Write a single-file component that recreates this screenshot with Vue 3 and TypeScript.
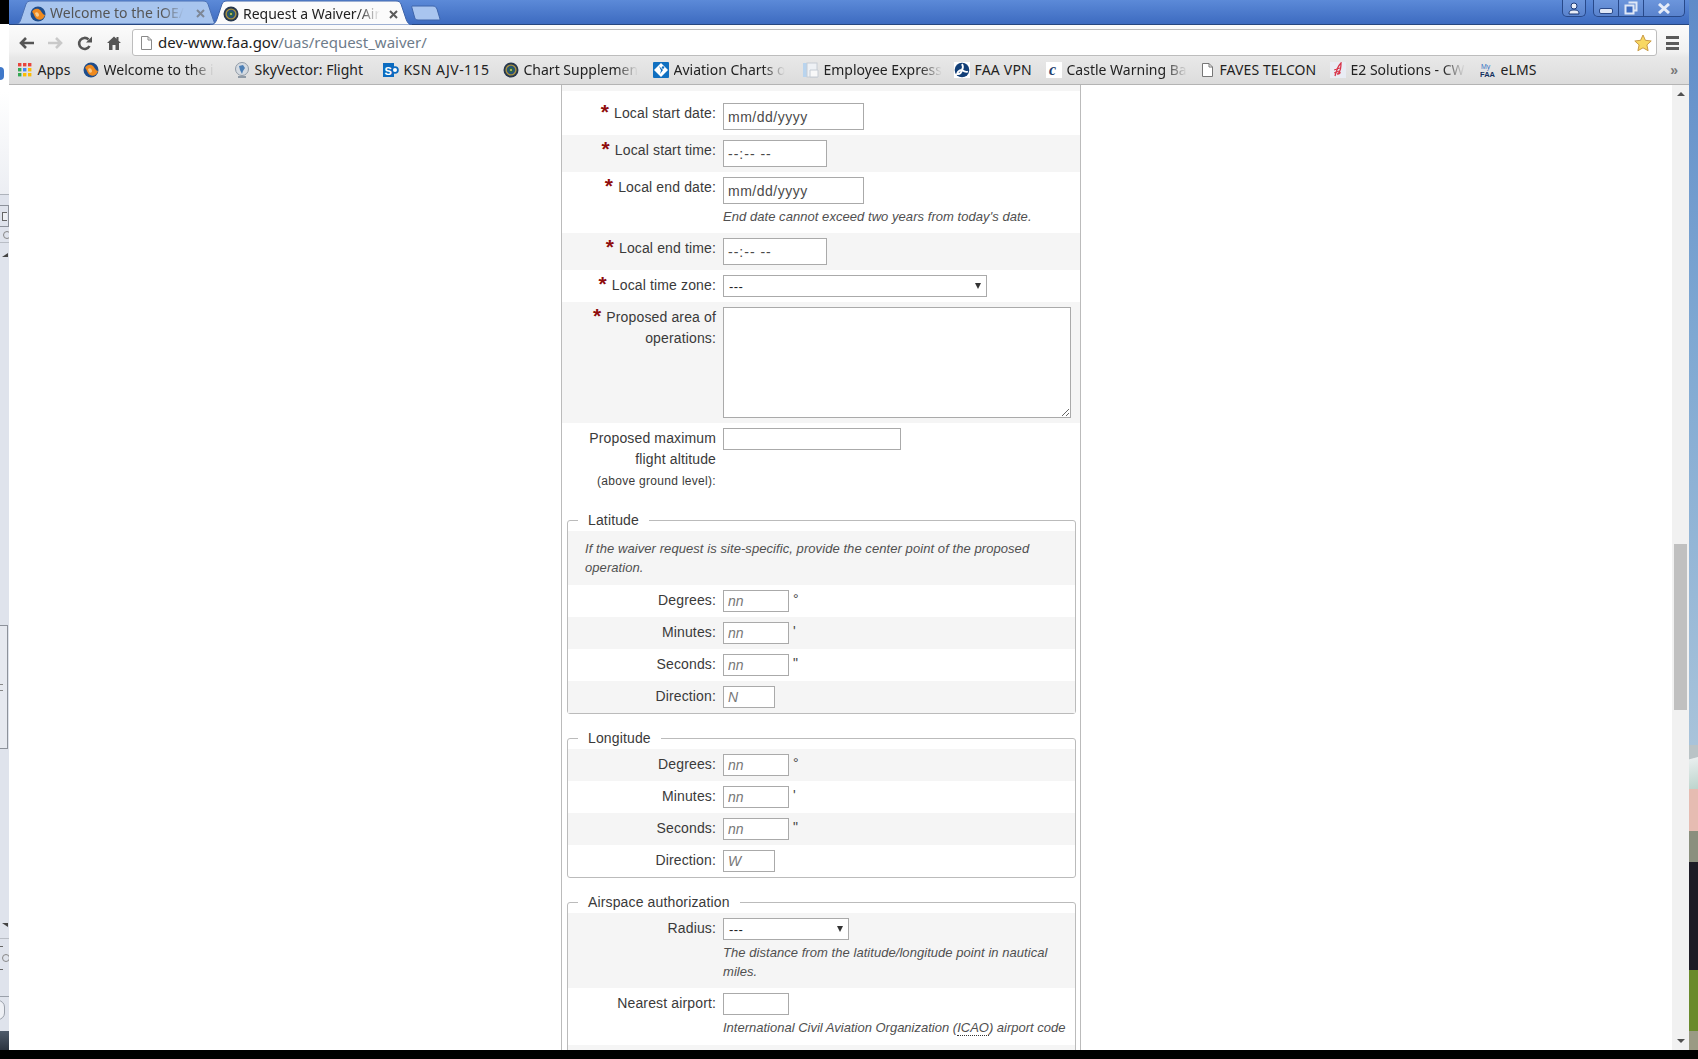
<script setup lang="ts">
interface Bookmark { text: string; icon: string; width: number; fade: boolean; spacing: number }
const bookmarks: Bookmark[] = [
  { text: 'Apps', icon: 'apps', width: 66, fade: false, spacing: 0 },
  { text: 'Welcome to the i', icon: 'swirl', width: 151, fade: true, spacing: 0 },
  { text: 'SkyVector: Flight', icon: 'sky', width: 149, fade: false, spacing: 0 },
  { text: 'KSN AJV-115', icon: 'sp', width: 120, fade: false, spacing: 0.45 },
  { text: 'Chart Supplemen', icon: 'seal', width: 150, fade: true, spacing: 0 },
  { text: 'Aviation Charts o', icon: 'diamond', width: 150, fade: true, spacing: 0 },
  { text: 'Employee Express', icon: 'docs', width: 151, fade: true, spacing: 0 },
  { text: 'FAA VPN', icon: 'dot', width: 92, fade: false, spacing: 0.2 },
  { text: 'Castle Warning Ba', icon: 'castle', width: 153, fade: true, spacing: 0 },
  { text: 'FAVES TELCON', icon: 'page', width: 131, fade: false, spacing: 0.1 },
  { text: 'E2 Solutions - CW', icon: 'feather', width: 150, fade: true, spacing: 0 },
  { text: 'eLMS', icon: 'myfaa', width: 60, fade: false, spacing: 0.1 },
]
const latRows = [
  { label: 'Degrees:', mark: '°', alt: false },
  { label: 'Minutes:', mark: "'", alt: true },
  { label: 'Seconds:', mark: '"', alt: false },
]
const lonRows = [
  { label: 'Degrees:', mark: '°', alt: true },
  { label: 'Minutes:', mark: "'", alt: false },
  { label: 'Seconds:', mark: '"', alt: true },
]
</script>

<template>
  <div class="desktop">
    <div class="screen">
      <aside class="sliver">
        <div class="sliver-black"></div>
        <div class="sliver-top"><span class="sliver-dot"></span></div>
        <div class="sliver-panel">
          <span class="sl-ic"><span class="sl-glyph"></span></span>
          <span class="sl-ic sl-ic2"><span class="sl-round"></span></span>
          <span class="sl-tri"></span>
          <div class="sl-thumb"><span class="sl-grip"></span></div>
          <span class="sl-tri sl-tri2"></span>
          <span class="sl-rule"></span>
          <span class="sl-dash"></span>
          <span class="sl-round sl-round2"></span>
          <span class="sl-dash"></span>
          <span class="sl-rule sl-rule2"></span>
          <span class="sl-pill"></span>
        </div>
        <div class="sliver-dark"></div>
      </aside>

      <div class="window">
        <header class="titlebar">
          <div class="tabs">
            <div class="tab">
              <svg class="tab-bg" width="200" height="24" viewBox="0 0 200 24"><path d="M0 24C4 24 5 22 6 19L11 4C12 2 13 1 16 1H188C191 1 192 2 193 4L198 19C199 22 200 24 200 24Z" fill="#a8c5ee" stroke="#4a70b4" stroke-width="1"/></svg>
              <svg class="fav" width="16" height="16" viewBox="0 0 16 16"><circle cx="8" cy="8" r="7.5" fill="#1e4d8c"/><path d="M2 6C4 2 8 2 10 4C12 6 13 9 15 9C14 13 10 15 7 13C4 11 4 7 2 6Z" fill="#ef8a1f"/><path d="M5 7C7 5 9 7 9 9C9 11 7 11 6 10Z" fill="#f7c98a"/></svg>
              <span class="tab-title"><span class="faded dim">Welcome to the iOE/</span></span>
              <svg class="close" width="9" height="9" viewBox="0 0 9 9"><path d="M1 1L8 8M8 1L1 8" stroke="#7d8796" stroke-width="2"/></svg>
            </div>
            <div class="tab tab-active">
              <svg class="tab-bg" width="202" height="25" viewBox="0 0 202 25"><path d="M0 25C4 25 6 22 7 19L12 4C13 2 14 1 17 1H186C189 1 190 2 191 4L196 19C197 22 199 25 202 25Z" fill="#fbfbfb" stroke="#3e64aa" stroke-width="1"/></svg>
              <svg class="fav" width="16" height="16" viewBox="0 0 16 16"><circle cx="8" cy="8" r="7.5" fill="#26374d"/><circle cx="8" cy="8" r="5.6" fill="#a8923f"/><circle cx="8" cy="8" r="4.2" fill="#27507a"/><circle cx="8" cy="8" r="2.4" fill="#2c6a3f"/><circle cx="8" cy="8" r="1" fill="#d8c468"/></svg>
              <span class="tab-title"><span class="faded">Request a Waiver/Air</span></span>
              <svg class="close" width="9" height="9" viewBox="0 0 9 9"><path d="M1 1L8 8M8 1L1 8" stroke="#5b5b5b" stroke-width="2"/></svg>
            </div>
            <svg class="newtab" width="30" height="16" viewBox="0 0 30 16"><path d="M1 1H22C24 1 25 2 26 4L29 14C29 15 28 15 27 15H7C5 15 4 14 3.500 12L1 3C0.700 2 0.700 1 1 1Z" fill="#a9c5ef" stroke="#3e64aa"/></svg>
          </div>
          <div class="controls">
            <div class="ctl ctl-user">
              <svg width="14" height="13" viewBox="0 0 14 13"><circle cx="7" cy="4" r="3" fill="#e9eef8" stroke="#1d3b78"/><path d="M2 12C2 8.500 4 8 7 8C10 8 12 8.500 12 12Z" fill="#e9eef8" stroke="#1d3b78"/></svg>
            </div>
            <div class="ctl ctl-group">
              <div class="cell cell-min"><span class="minbar"></span></div>
              <div class="cell cell-res">
                <svg width="14" height="14" viewBox="0 0 14 14"><path d="M4.500 1.500H12.500V9.500H10" fill="none" stroke="#dfe7f6" stroke-width="2"/><rect x="1.500" y="4.500" width="8" height="8" fill="#3e6cc0" stroke="#dfe7f6" stroke-width="2"/></svg>
              </div>
              <div class="cell cell-close">
                <svg width="14" height="11" viewBox="0 0 14 11"><path d="M2 1L12 10M12 1L2 10" stroke="#e6ecf8" stroke-width="3"/></svg>
              </div>
            </div>
          </div>
        </header>

        <div class="chrome">
          <div class="toolbar">
            <div class="nav">
              <svg class="n-back" width="15" height="12" viewBox="0 0 15 12"><path d="M7 1L2 6L7 11M2 6H15" fill="none" stroke="#555" stroke-width="2.600"/></svg>
              <svg class="n-fwd" width="15" height="12" viewBox="0 0 15 12"><path d="M8 1L13 6L8 11M13 6H0" fill="none" stroke="#c9c9c9" stroke-width="2.600"/></svg>
              <svg class="n-rel" width="15" height="15" viewBox="0 0 15 15"><path d="M12.500 10A5.500 5.500 0 1 1 11.500 3.500" fill="none" stroke="#555" stroke-width="2.600"/><path d="M9 6.500H15V0.500Z" fill="#555"/></svg>
              <svg class="n-home" width="14" height="14" viewBox="0 0 14 14"><path d="M7 0.500L0 7H2V14H5.500V9H8.500V14H12V7H14L11.500 4.700V1H9.500V2.800Z" fill="#555"/></svg>
            </div>
            <div class="omnibox">
              <svg class="pg" width="11" height="14" viewBox="0 0 11 14"><path d="M1 .5H7L10.500 4V13.500H.5V.5Z" fill="#fff" stroke="#8a8a8a"/><path d="M7 .5V4H10.500" fill="none" stroke="#8a8a8a"/></svg>
              <span class="url"><span class="host">dev-www.faa.gov</span>/uas/request_waiver/</span>
              <svg class="star" width="18" height="18" viewBox="0 0 18 18"><path d="M9 1L11.400 6.300L17.200 7L12.900 10.900L14.100 16.700L9 13.800L3.900 16.700L5.100 10.900L.8 7L6.600 6.300Z" fill="#f8d862" stroke="#c99a45"/></svg>
            </div>
            <div class="menu"><span></span><span></span><span></span></div>
          </div>
          <div class="bookmarks">
            <div v-for="b in bookmarks" :key="b.text" class="bm" :style="{ width: b.width + 'px' }">
              <span class="bm-ic">
                <svg v-if="b.icon === 'apps'" width="14" height="14" viewBox="0 0 14 14">
                  <rect x="0" y="0" width="3.400" height="3.400" fill="#e8453c"/><rect x="5" y="0" width="3.400" height="3.400" fill="#e8453c"/><rect x="10" y="0" width="3.400" height="3.400" fill="#e8453c"/>
                  <rect x="0" y="5" width="3.400" height="3.400" fill="#34a853"/><rect x="5" y="5" width="3.400" height="3.400" fill="#4285f4"/><rect x="10" y="5" width="3.400" height="3.400" fill="#fbbc05"/>
                  <rect x="0" y="10" width="3.400" height="3.400" fill="#34a853"/><rect x="5" y="10" width="3.400" height="3.400" fill="#fbbc05"/><rect x="10" y="10" width="3.400" height="3.400" fill="#fbbc05"/>
                </svg>
                <svg v-else-if="b.icon === 'swirl'" width="16" height="16" viewBox="0 0 16 16"><circle cx="8" cy="8" r="7.500" fill="#1e4d8c"/><path d="M2 6C4 2 8 2 10 4C12 6 13 9 15 9C14 13 10 15 7 13C4 11 4 7 2 6Z" fill="#ef8a1f"/><path d="M5 7C7 5 9 7 9 9C9 11 7 11 6 10Z" fill="#f7c98a"/></svg>
                <svg v-else-if="b.icon === 'sky'" width="16" height="16" viewBox="0 0 16 16"><circle cx="8" cy="7" r="6.500" fill="#d5dbe2" stroke="#8f9aa6"/><path d="M5 4L9 3L11 6L9 9L8 12L6 8Z" fill="#4d7fb5"/><path d="M4 15H12" stroke="#8f9aa6" stroke-width="2"/></svg>
                <svg v-else-if="b.icon === 'sp'" width="16" height="16" viewBox="0 0 16 16"><rect x="0" y="1" width="11" height="14" fill="#0b6bc0"/><circle cx="12" cy="8" r="3.800" fill="#0b6bc0"/><circle cx="12" cy="8" r="2" fill="#fff"/><text x="1.500" y="12.500" font-size="11" font-weight="700" font-family="Liberation Sans" fill="#fff">S</text></svg>
                <svg v-else-if="b.icon === 'seal'" width="16" height="16" viewBox="0 0 16 16"><circle cx="8" cy="8" r="7.500" fill="#26374d"/><circle cx="8" cy="8" r="5.600" fill="#a8923f"/><circle cx="8" cy="8" r="4.200" fill="#27507a"/><circle cx="8" cy="8" r="2.400" fill="#2c6a3f"/><circle cx="8" cy="8" r="1" fill="#d8c468"/></svg>
                <svg v-else-if="b.icon === 'diamond'" width="16" height="16" viewBox="0 0 16 16"><rect x="0" y="0" width="16" height="16" rx="1" fill="#0f6fc0"/><path d="M8 1L15 8L8 15L1 8Z" fill="#fff"/><path d="M6 4L10 8L7 12L8 8.500Z" fill="#0f6fc0"/><circle cx="10" cy="5.500" r="1.200" fill="#0f6fc0"/></svg>
                <svg v-else-if="b.icon === 'docs'" width="16" height="16" viewBox="0 0 16 16"><rect x="0" y="1" width="6" height="14" fill="#b9d4ee"/><rect x="4" y="1" width="10" height="14" fill="#eef1f5" stroke="#c6ccd4"/><path d="M7 8H15V15H7Z" fill="#f8f8f8" stroke="#c6ccd4"/></svg>
                <svg v-else-if="b.icon === 'dot'" width="16" height="16" viewBox="0 0 16 16"><rect width="16" height="16" fill="#fff"/><circle cx="8" cy="8" r="7.300" fill="#123f78"/><path d="M8 2C9.500 4.500 9 6.500 8 8C6 8 4 9 3 12C6 12.500 7.500 10.500 8 8C10 9.500 12 10.500 14 9.500" fill="none" stroke="#fff" stroke-width="1.800"/></svg>
                <svg v-else-if="b.icon === 'castle'" width="16" height="16" viewBox="0 0 16 16"><rect width="16" height="16" fill="#fff"/><text x="3" y="13" font-size="16" font-style="italic" font-weight="700" font-family="Liberation Serif" fill="#23406e">c</text></svg>
                <svg v-else-if="b.icon === 'page'" width="11" height="14" viewBox="0 0 11 14"><path d="M1 .5H7L10.500 4V13.500H.5V.5Z" fill="#fff" stroke="#777"/><path d="M7 .5V4H10.500" fill="none" stroke="#777"/></svg>
                <svg v-else-if="b.icon === 'feather'" width="16" height="16" viewBox="0 0 16 16"><rect width="16" height="16" fill="#e9ecf4"/><path d="M5 14C6 10 8 4 11 1C11 5 11 8 9 10C11 10 10 12 7 12" fill="none" stroke="#d8344a" stroke-width="1.300"/><path d="M4 8L10 6M4 11L9 9" stroke="#d8344a"/></svg>
                <svg v-else width="16" height="16" viewBox="0 0 16 16"><text x="1" y="6.500" font-size="7" font-family="Liberation Sans" fill="#3b74c4">My</text><text x="0" y="14.500" font-size="7.500" font-weight="700" font-family="Liberation Sans" fill="#13315f">FAA</text></svg>
              </span>
              <span class="bm-text" :class="{ faded: b.fade }" :style="{ letterSpacing: b.spacing + 'px' }">{{ b.text }}</span>
            </div>
            <span class="more">»</span>
          </div>
        </div>

        <div class="viewport">
          <main class="page">
            <form class="card" @submit.prevent>
              <div class="strip"></div>
              <div class="row first">
                <label class="lab"><span class="req">*</span>Local start date:</label>
                <div class="ctrl"><input class="inp w-date" value="mm/dd/yyyy" /></div>
              </div>
              <div class="row alt">
                <label class="lab"><span class="req">*</span>Local start time:</label>
                <div class="ctrl"><input class="inp w-time" value="--:-- --" /></div>
              </div>
              <div class="row hinted">
                <label class="lab"><span class="req">*</span>Local end date:</label>
                <div class="ctrl">
                  <input class="inp w-date" value="mm/dd/yyyy" />
                  <p class="hint">End date cannot exceed two years from today's date.</p>
                </div>
              </div>
              <div class="row alt">
                <label class="lab"><span class="req">*</span>Local end time:</label>
                <div class="ctrl"><input class="inp w-time" value="--:-- --" /></div>
              </div>
              <div class="row">
                <label class="lab"><span class="req">*</span>Local time zone:</label>
                <div class="ctrl"><div class="sel w-zone"><select><option>---</option></select></div></div>
              </div>
              <div class="row alt">
                <label class="lab"><span class="req">*</span>Proposed area of operations:</label>
                <div class="ctrl"><textarea class="area"></textarea></div>
              </div>
              <div class="row">
                <label class="lab lab-tall">Proposed maximum flight altitude<br /><small>(above ground level):</small></label>
                <div class="ctrl"><input class="inp w-alt" /></div>
              </div>

              <fieldset class="fs">
                <legend>Latitude</legend>
                <p class="note">If the waiver request is site-specific, provide the center point of the proposed operation.</p>
                <div v-for="r in latRows" :key="r.label" class="row" :class="{ alt: r.alt }">
                  <label class="lab">{{ r.label }}</label>
                  <div class="ctrl inline"><input class="inp w-nn it" placeholder="nn" /><span class="mark">{{ r.mark }}</span></div>
                </div>
                <div class="row alt">
                  <label class="lab">Direction:</label>
                  <div class="ctrl"><input class="inp w-dir it" placeholder="N" /></div>
                </div>
              </fieldset>

              <fieldset class="fs">
                <legend>Longitude</legend>
                <div v-for="r in lonRows" :key="r.label" class="row" :class="{ alt: r.alt }">
                  <label class="lab">{{ r.label }}</label>
                  <div class="ctrl inline"><input class="inp w-nn it" placeholder="nn" /><span class="mark">{{ r.mark }}</span></div>
                </div>
                <div class="row">
                  <label class="lab">Direction:</label>
                  <div class="ctrl"><input class="inp w-dir it" placeholder="W" /></div>
                </div>
              </fieldset>

              <fieldset class="fs">
                <legend>Airspace authorization</legend>
                <div class="row alt hinted">
                  <label class="lab">Radius:</label>
                  <div class="ctrl">
                    <div class="sel w-rad"><select><option>---</option></select></div>
                    <p class="hint">The distance from the latitude/longitude point in nautical miles.</p>
                  </div>
                </div>
                <div class="row hinted last">
                  <label class="lab">Nearest airport:</label>
                  <div class="ctrl">
                    <input class="inp w-nn" />
                    <p class="hint tight">International Civil Aviation Organization (<abbr title="International Civil Aviation Organization">ICAO</abbr>) airport code</p>
                  </div>
                </div>
                <div class="row alt tail"></div>
              </fieldset>
            </form>
          </main>
          <div class="scrollbar">
            <span class="arrow up"></span>
            <span class="thumb"></span>
            <span class="arrow down"></span>
          </div>
        </div>
      </div>

      <aside class="wall">
        <div class="w-sky"></div>
        <div class="w-roof"></div>
        <div class="w-siding"></div>
        <div class="w-wall"></div>
        <div class="w-dark"></div>
        <div class="w-grass"></div>
        <div class="w-road"></div>
      </aside>
    </div>
  </div>
</template>

<style>
html, body { margin: 0; background: #000; overflow: hidden; }
</style>

<style scoped>
.desktop { width: 1698px; height: 1059px; background: #000; overflow: hidden; font-family: "Liberation Sans", Arial, sans-serif; }
.screen { display: flex; height: 1050px; overflow: hidden; }

/* left sliver */
.sliver { width: 9px; flex: none; display: flex; flex-direction: column; }
.sliver-black { height: 24px; background: #000; flex: none; }
.sliver-top { height: 170px; flex: none; background: linear-gradient(#fff 0, #fff 40%, #eceef3 100%); padding-top: 43px; box-sizing: border-box; }
.sliver-dot { display: block; width: 4px; height: 13px; background: #3f78c9; border-radius: 0 7px 7px 0; }
.sliver-panel { flex: 1; background: #dfe3ec; border-top: 1px solid #aeb3bb; display: flex; flex-direction: column; }
.sl-ic { display: flex; align-items: center; justify-content: flex-end; height: 20px; flex: none; border: 1px solid #8d929b; border-left: 0; margin-top: 10px; }
.sl-glyph { width: 4px; height: 7px; border: 1px solid #666; border-right: 0; background: #eef0f4; margin-right: 1px; }
.sl-ic2 { height: 14px; margin-top: 1px; border: 0; border-bottom: 1px solid #b9bdc5; }
.sl-round { display: block; width: 6px; height: 6px; border: 1px solid #888; border-radius: 50%; margin-right: -2px; }
.sl-tri { display: block; width: 0; height: 0; flex: none; margin-top: 10px; border-left: 6px solid transparent; border-right: 0; border-bottom: 4px solid #444; margin-left: 2px; }
.sl-thumb { height: 124px; flex: none; margin-top: 368px; width: 8px; background: #e6e9f0; border: 1px solid #8d929b; border-left: 0; box-sizing: border-box; display: flex; align-items: center; }
.sl-grip { display: block; width: 3px; height: 5px; border-top: 1px solid #888; border-bottom: 1px solid #888; }
.sl-tri2 { margin-top: 174px; border-bottom: 0; border-top: 4px solid #444; border-left: 6px solid transparent; }
.sl-rule { display: block; height: 1px; flex: none; background: #b9bdc5; margin-top: 11px; }
.sl-dash { display: block; width: 3px; height: 1px; flex: none; background: #666; margin-top: 7px; }
.sl-round2 { margin: 7px 0 0 2px; flex: none; }
.sl-rule2 { margin-top: 26px; background: #9aa0aa; }
.sl-pill { display: block; width: 14px; height: 20px; flex: none; margin: 3px 0 0 -9px; background: #eef0f5; border: 1px solid #9aa0aa; border-radius: 10px; box-sizing: border-box; }
.sliver-dark { height: 19px; flex: none; background: linear-gradient(#4f5b6b, #2c3440); }

/* window */
.window { width: 1680px; flex: none; display: flex; flex-direction: column; background: #fff; }
.titlebar { height: 25px; flex: none; display: flex; justify-content: space-between; align-items: flex-start; background: linear-gradient(#5c8ad8, #3d6bc0); box-sizing: border-box; border-bottom: 1px solid #26467f; }
.tabs { display: flex; align-items: flex-start; margin-left: 6px; font-family: "Noto Sans", sans-serif; font-size: 14px; }
.tab { position: relative; width: 200px; height: 24px; display: flex; align-items: center; padding-left: 15px; box-sizing: border-box; }
.tab-active { width: 202px; margin-left: -5px; padding-left: 13px; height: 25px; }
.tab-bg { position: absolute; left: 0; top: 0; }
.fav { position: relative; flex: none; margin-top: 3px; }
.tab-title { position: relative; width: 140px; margin-left: 4px; white-space: nowrap; color: #222; margin-top: 2px; line-height: 20px; flex: none; }
.tab-title .faded { display: inline-block; max-width: 138px; overflow: hidden; vertical-align: top; }
.dim { color: #555; }
.close { position: relative; flex: none; margin-left: 6px; margin-top: 3px; }
.faded { mask-image: linear-gradient(to right, #000 calc(100% - 22px), transparent 100%); -webkit-mask-image: linear-gradient(to right, #000 calc(100% - 22px), transparent 100%); }
.newtab { margin-left: -1px; margin-top: 5px; }
.controls { display: flex; gap: 7px; margin-right: 4px; }
.ctl { height: 17px; box-sizing: border-box; border: 1px solid #28498a; border-top: 0; border-radius: 0 0 5px 5px; background: rgba(255,255,255,.1); display: flex; align-items: center; justify-content: center; }
.ctl-user { width: 24px; }
.ctl-group { width: 92px; }
.cell { height: 100%; display: flex; align-items: center; justify-content: center; border-right: 1px solid #28498a; box-sizing: border-box; }
.cell-min { width: 25px; }
.cell-res { width: 25px; }
.cell-close { flex: 1; border-right: 0; }
.minbar { display: block; width: 12px; height: 4px; margin-top: 6px; border-radius: 2px; background: #dfe7f6; border: 1px solid #2b4a8a; box-sizing: content-box; }

/* toolbar */
.chrome { background: linear-gradient(#fbfbfb, #f1f1f1 45%, #e8e8e8 55%, #dcdcdc); border-bottom: 1px solid #b4b4b4; flex: none; }
.toolbar { height: 31px; display: flex; align-items: flex-start; }
.nav { width: 123px; flex: none; position: relative; height: 31px; display: flex; align-items: flex-start; padding-left: 10px; box-sizing: border-box; }
.n-back { margin-top: 12px; }
.n-fwd { margin-top: 12px; margin-left: 14px; }
.n-rel { margin-top: 11px; margin-left: 14px; }
.n-home { margin-top: 11px; margin-left: 15px; }
.omnibox { width: 1525px; height: 27px; margin-top: 4px; box-sizing: border-box; flex: none; background: #fff; border: 1px solid #bdbdbd; border-radius: 3px; display: flex; align-items: center; padding-left: 8px; padding-right: 4px; }
.pg { flex: none; }
.url { margin-left: 6px; font: 15px/20px "Noto Sans", sans-serif; color: #6e7c8a; flex: 1; white-space: nowrap; margin-top: -2px; }
.host { color: #1e1e1e; }
.star { flex: none; }
.menu { margin-left: 9px; margin-top: 11px; width: 13px; display: flex; flex-direction: column; gap: 2.500px; }
.menu span { display: block; height: 3px; background: #5a5a5a; }

.bookmarks { height: 28px; display: flex; align-items: center; padding-left: 8px; font: 14px/20px "Noto Sans", sans-serif; color: #222; }
.bm { display: flex; align-items: center; flex: none; box-sizing: border-box; }
.bm-ic { width: 16px; height: 16px; flex: none; display: flex; align-items: center; justify-content: center; }
.bm-text { margin-left: 4.500px; white-space: nowrap; flex: none; }
.more { margin-left: auto; margin-right: 11px; color: #777; font: 700 14px/14px "Liberation Sans", sans-serif; }

/* page */
.viewport { flex: 1; display: flex; min-height: 0; overflow: hidden; }
.page { flex: 1; padding-left: 552px; box-sizing: border-box; }
.card { width: 520px; box-sizing: border-box; border: solid #bbb; border-width: 0 1px; color: #3a3a3a; font-size: 14px; line-height: 21px; letter-spacing: .14px; }
.strip { height: 6px; background: #f5f5f5; }
.row { display: flex; gap: 7px; padding: 5px 0; }
.first { padding-top: 12px; }
.alt { background: #f5f5f5; }
.lab { width: 154px; flex: none; text-align: right; }
.lab-tall { margin-bottom: -1px; }
.req { color: #8f0d0d; font-size: 21px; font-weight: 700; line-height: 0; margin-right: 5px; position: relative; top: 1px; }
small { font-size: 12px; letter-spacing: .3px; }
.ctrl { flex: 1; min-width: 0; }
.inline { display: flex; align-items: flex-start; }
.inp, .area, .sel select { display: block; box-sizing: border-box; border: 1px solid #aaa; border-radius: 0; background: #fff; font: 14px "Liberation Sans", Arial, sans-serif; color: #4a4a4a; padding: 0 4px; margin: 0; outline: none; }
.inp { height: 22px; }
.w-date { width: 141px; height: 27px; letter-spacing: .5px; }
.w-time { width: 104px; height: 27px; letter-spacing: 1px; }
.w-alt { width: 178px; }
.w-nn { width: 66px; }
.w-dir { width: 52px; }
.it { font-style: italic; }
.it::placeholder { color: #777; opacity: 1; }
.area { width: 348px; height: 111px; resize: both; }
.sel { position: relative; height: 22px; }
.sel select { width: 100%; height: 22px; appearance: none; color: #222; font-size: 13px; padding-left: 5px; letter-spacing: .4px; }
.sel::after { content: ""; position: absolute; right: 6px; top: 8px; border: 3.500px solid transparent; border-top: 6px solid #333; border-bottom: 0; }
.w-zone { width: 264px; }
.w-rad { width: 126px; }
.hint { margin: 3px 0 0; width: 348px; font-size: 13px; line-height: 19px; font-style: italic; color: #505050; letter-spacing: .05px; }
.tight { letter-spacing: 0; }
.hinted { padding-bottom: 7px; }
.last { padding-bottom: 8px; }
.mark { margin-left: 4px; line-height: 19px; font-size: 14px; color: #444; }
abbr { border-bottom: 1px dotted #333; text-decoration: none; }

.fs { width: 509px; margin: 14px 5px 0; box-sizing: border-box; padding: 0; border: 1px solid #bbb; border-radius: 3px; min-width: 0; }
legend { margin-left: 10px; padding: 0 10px; line-height: 21px; font-size: 14px; color: #3a3a3a; }
.fs .lab { width: 148px; }
.note { margin: 0; padding: 8px 17px; background: #f5f5f5; font-size: 13px; line-height: 19px; font-style: italic; color: #505050; letter-spacing: .07px; }
.tail { height: 40px; box-sizing: border-box; }

/* scrollbar */
.scrollbar { width: 17px; flex: none; background: #f1f1f1; display: flex; flex-direction: column; align-items: center; }
.arrow { display: block; border: 4px solid transparent; width: 0; height: 0; }
.up { border-top: 0; border-bottom: 4px solid #505050; margin-top: 7px; }
.down { border-bottom: 0; border-top: 4px solid #505050; margin-top: auto; margin-bottom: 7px; }
.thumb { display: block; width: 13px; height: 166px; background: #c0c0c0; margin-top: 448px; }

/* wallpaper */
.wall { flex: 1; display: flex; flex-direction: column; }
.w-sky { height: 745px; background: linear-gradient(#5f8bc8, #7fa8d2 45%, #a8c3da); }
.w-roof { height: 44px; background: linear-gradient(165deg, #b9c3c6 30%, #e8eeee 32%, #bcd4cc 100%); }
.w-siding { height: 42px; background: #e6bcb2; }
.w-wall { height: 31px; background: #8a8f7e; }
.w-dark { height: 108px; background: #1d1c26; }
.w-grass { height: 61px; background: #6a8a2c; }
.w-road { flex: 1; background: #9a9a84; }
</style>
